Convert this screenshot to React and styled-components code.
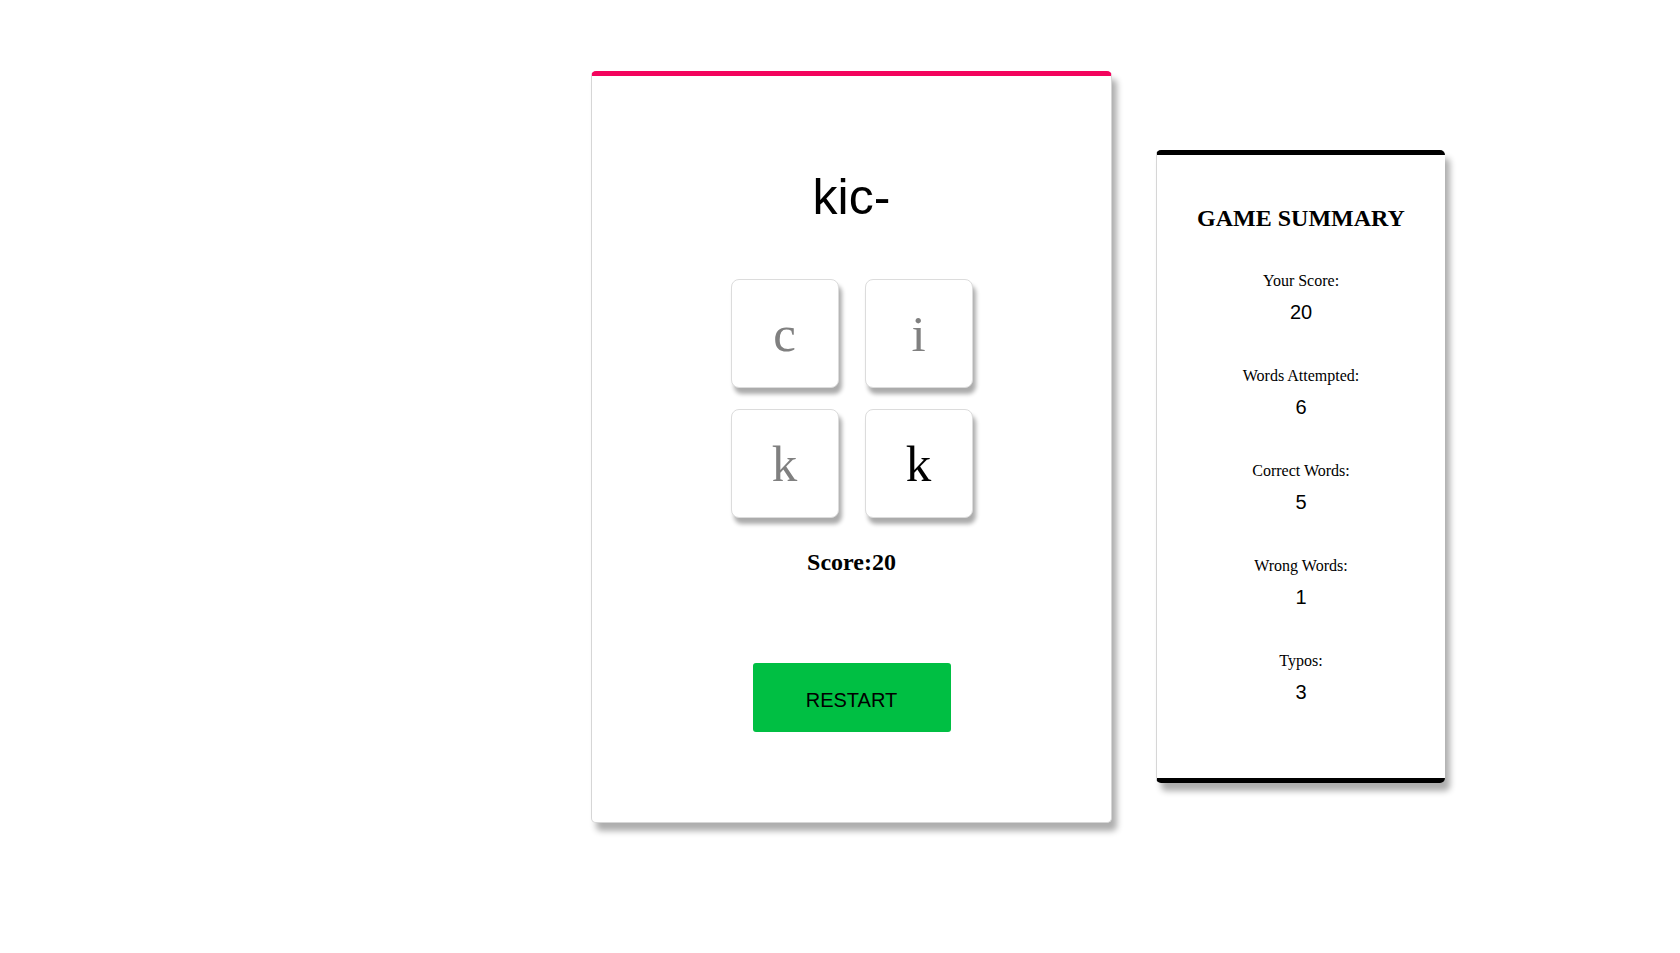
import styled, {createGlobalStyle} from 'styled-components';

const GlobalStyle = createGlobalStyle`
  html, body {
    margin: 0;
    padding: 0;
    background: #ffffff;
    font-family: "Liberation Serif", "Times New Roman", serif;
  }
`;

const tiles = [
  {letter: 'c', used: true},
  {letter: 'i', used: true},
  {letter: 'k', used: true},
  {letter: 'k', used: false},
];

const summary = [
  {label: 'Your Score:', value: 20},
  {label: 'Words Attempted:', value: 6},
  {label: 'Correct Words:', value: 5},
  {label: 'Wrong Words:', value: 1},
  {label: 'Typos:', value: 3},
];

export default function App() {
  return (
    <>
      <GlobalStyle />
      <STYLED_PAGE>
        <STYLED_GAME_CARD>
          <STYLED_WORD>kic-</STYLED_WORD>
          <STYLED_TILE_GRID>
            {tiles.map((tile, index) => (
              <STYLED_TILE key={index} $used={tile.used}>
                {tile.letter}
              </STYLED_TILE>
            ))}
          </STYLED_TILE_GRID>
          <STYLED_SCORE>Score:20</STYLED_SCORE>
          <STYLED_RESTART_BUTTON type="button">RESTART</STYLED_RESTART_BUTTON>
        </STYLED_GAME_CARD>

        <STYLED_SUMMARY_CARD>
          <STYLED_SUMMARY_TITLE>GAME SUMMARY</STYLED_SUMMARY_TITLE>
          {summary.map(item => (
            <STYLED_STAT key={item.label}>
              <StyledStatLabel>{item.label}</StyledStatLabel>
              <StyledStatValue>{item.value}</StyledStatValue>
            </STYLED_STAT>
          ))}
        </STYLED_SUMMARY_CARD>
      </STYLED_PAGE>
    </>
  );
}

const STYLED_PAGE = styled.div`
  display: grid;
  grid-template-columns: 1fr 521px 1fr;
  align-items: start;
  padding-left: 23px;
  min-height: 953px;
  box-sizing: border-box;
`;

const STYLED_GAME_CARD = styled.div`
  grid-column: 2;
  margin-top: 71px;
  display: flex;
  flex-direction: column;
  align-items: center;
  box-sizing: border-box;
  width: 521px;
  height: 752px;
  background: #ffffff;
  border: 1px solid #d6d6d6;
  border-top: 5px solid #f3045d;
  border-radius: 5px;
  box-shadow: 5px 8px 6px rgba(0, 0, 0, 0.32);
`;

const STYLED_WORD = styled.div`
  margin-top: 92px;
  font-family: "Liberation Sans", Arial, sans-serif;
  font-size: 50px;
  color: #000000;
`;

const STYLED_TILE_GRID = styled.div`
  margin-top: 53px;
  display: grid;
  grid-template-columns: repeat(2, 108px);
  grid-auto-rows: 109px;
  column-gap: 26px;
  row-gap: 21px;
`;

const STYLED_TILE = styled.div`
  display: flex;
  align-items: center;
  justify-content: center;
  box-sizing: border-box;
  background: #ffffff;
  border: 1px solid #dcdcdc;
  border-radius: 8px;
  box-shadow: 3px 6px 4px rgba(0, 0, 0, 0.33);
  font-family: "Liberation Serif", "Times New Roman", serif;
  font-size: 51px;
  color: ${({$used}) => ($used ? '#808080' : '#000000')};
`;

const STYLED_SCORE = styled.div`
  margin-top: 31px;
  font-family: "Liberation Serif", "Times New Roman", serif;
  font-weight: bold;
  font-size: 24px;
  color: #000000;
`;

const STYLED_RESTART_BUTTON = styled.button`
  margin-top: 87px;
  width: 198px;
  height: 69px;
  padding: 6px 0 0;
  border: 0;
  border-radius: 3px;
  background: #00bf43;
  color: #000000;
  font-family: "Liberation Sans", Arial, sans-serif;
  font-size: 20px;
  cursor: pointer;
`;

const STYLED_SUMMARY_CARD = styled.div`
  grid-column: 3;
  margin-top: 150px;
  margin-left: 44px;
  width: 289px;
  box-sizing: border-box;
  padding: 50px 0 74px;
  display: flex;
  flex-direction: column;
  align-items: center;
  text-align: center;
  background: #ffffff;
  border-left: 1px solid #d6d6d6;
  border-top: 5px solid #000000;
  border-bottom: 5px solid #000000;
  border-radius: 5px;
  box-shadow: 5px 8px 6px rgba(0, 0, 0, 0.32);
`;

const STYLED_SUMMARY_TITLE = styled.div`
  font-family: "Liberation Serif", "Times New Roman", serif;
  font-weight: bold;
  font-size: 24px;
  margin-bottom: 40px;
`;

const STYLED_STAT = styled.div`
  display: flex;
  flex-direction: column;
  align-items: center;
  gap: 11px;
  & + & {
    margin-top: 43px;
  }
`;

const StyledStatLabel = styled.div`
  font-family: "Liberation Serif", "Times New Roman", serif;
  font-size: 16px;
  color: #000000;
`;

const StyledStatValue = styled.div`
  font-family: "Liberation Sans", Arial, sans-serif;
  font-size: 20px;
  color: #000000;
`;
